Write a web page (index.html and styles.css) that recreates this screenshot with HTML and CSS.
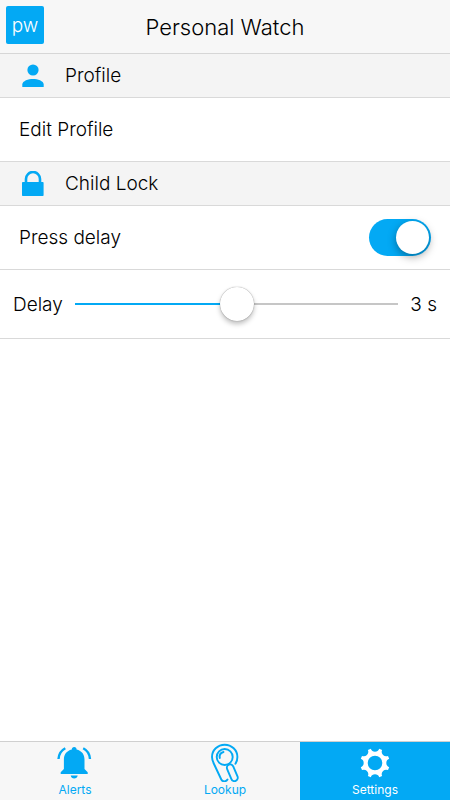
FILE: index.html
```html
<!DOCTYPE html>
<html lang="en">
<head>
<meta charset="utf-8">
<meta name="viewport" content="width=device-width, initial-scale=1">
<title>Personal Watch</title>
<link rel="stylesheet" href="styles.css">
</head>
<body>
<header class="topbar">
  <span class="logo">pw</span>
  <h1 class="title">Personal Watch</h1>
</header>
<main class="content">
  <section>
    <h2 class="section-head">
      <svg class="section-icon" viewBox="0 0 24 26" aria-hidden="true"><circle cx="12" cy="7" r="5.6"/><path d="M1.300 24v-2.500C1.300 17.800 7.500 16 12 16s10.700 1.800 10.700 5.500V24z"/></svg>
      Profile
    </h2>
    <a class="row" href="#profile">Edit Profile</a>
  </section>
  <section>
    <h2 class="section-head">
      <svg class="section-icon" viewBox="0 0 24 26" aria-hidden="true"><path d="M5 13V8a7 7 0 0 1 14 0v5" fill="none" stroke="currentColor" stroke-width="2.600"/><rect x="1" y="11" width="21.600" height="14" rx=".8"/></svg>
      Child Lock
    </h2>
    <div class="row">
      <label for="press">Press delay</label>
      <input class="switch" id="press" type="checkbox" role="switch" checked>
    </div>
    <div class="row row-range">
      <label for="delay">Delay</label>
      <input class="slider" id="delay" type="range" min="1" max="5" value="3">
      <output class="value" for="delay">3 s</output>
    </div>
  </section>
</main>
<nav class="tabs">
  <a class="tab" href="#alerts">
    <svg class="tab-icon" viewBox="0 0 36 40" aria-hidden="true"><path d="M17.200 5c1.500 0 2.400 1 2.400 2.500 5.200 1.300 7.900 5 7.900 10V27l3.200 3.200V32h-27v-1.800L6.900 27v-9.500c0-5 2.700-8.700 7.900-10C14.800 6 15.700 5 17.200 5z"/><path d="M13.700 33.500h7c-.3 1.900-1.700 3-3.500 3s-3.200-1.100-3.500-3z"/><path d="M8.300 6.200C4.200 8.300 1.800 12 1.500 17M26.200 6.200c4.100 2.100 6.500 5.800 6.800 10.800" fill="none" stroke="currentColor" stroke-width="2.400"/></svg>
    Alerts
  </a>
  <a class="tab" href="#lookup">
    <svg class="tab-icon" viewBox="0 0 36 40" aria-hidden="true"><g fill="none" stroke="currentColor" stroke-width="1.900" stroke-linecap="round"><path d="M20.500 37.500C19 40 15.500 40 14.300 37.500L7 22C5.800 19.500 5 17.500 5 15a12.700 12.300 0 0 1 25.400 0c0 2.500-.7 5-2 6.800"/><circle cx="17.700" cy="15" r="8"/><path d="M12.800 16c-.6-3 1-5.300 3.700-6"/><rect x="22" y="22" width="6.600" height="17.500" rx="3.300" transform="rotate(-23 25.300 30.700)"/></g></svg>
    Lookup
  </a>
  <a class="tab tab-active" href="#settings" aria-current="page">
    <svg class="tab-icon" viewBox="0 0 36 40" aria-hidden="true"><path transform="translate(18 21)" fill-rule="evenodd" d="M-4.200-14.200A4.500 4.500 0 0 0 4.200-14.200L7.100-13A4.500 4.500 0 0 0 13-7.100L14.200-4.200A4.500 4.500 0 0 0 14.200 4.200L13 7.100A4.500 4.500 0 0 0 7.100 13L4.200 14.200A4.500 4.500 0 0 0-4.200 14.200L-7.100 13A4.500 4.500 0 0 0-13 7.100L-14.200 4.200A4.500 4.500 0 0 0-14.200-4.200L-13-7.100A4.500 4.500 0 0 0-7.100-13ZM7.300 0A7.300 7.300 0 1 0-7.300 0A7.300 7.300 0 1 0 7.300 0Z"/></svg>
    Settings
  </a>
</nav>
</body>
</html>
```
FILE: styles.css
```css
* { box-sizing: border-box; }
body {
  margin: 0;
  min-height: 100vh;
  display: flex;
  flex-direction: column;
  background: #fff;
  color: #000;
  font-family: Inter, "Liberation Sans", sans-serif;
  font-size: 19px;
  font-weight: 300;
}
a { color: inherit; text-decoration: none; }
.topbar {
  display: grid;
  grid-template-columns: 1fr auto 1fr;
  align-items: center;
  height: 54px;
  padding: 0 6px 3px;
  background: #f7f7f7;
  border-bottom: 1px solid #d6d6d6;
}
.logo {
  width: 38px;
  height: 38px;
  border-radius: 2px;
  background: #03a9f4;
  color: #fff;
  font-size: 19px;
  line-height: 40px;
  text-align: center;
}
.title { margin: 0; padding-top: 3px; font-size: 22px; font-weight: 300; }
.content { flex: 1; }
.section-head {
  display: flex;
  align-items: center;
  gap: 20px;
  height: 44px;
  margin: 0;
  padding: 0 21px;
  background: #f4f4f4;
  border-bottom: 1px solid #d9d9d9;
  font-size: 19px;
  font-weight: 300;
}
.section-icon { width: 24px; height: 26px; fill: currentColor; color: #03a9f4; }
.row {
  display: flex;
  align-items: center;
  justify-content: space-between;
  height: 64px;
  padding: 0 19px;
  border-bottom: 1px solid #d9d9d9;
}
.row-range { height: 69px; padding: 0 13px; gap: 12px; }
.switch {
  appearance: none;
  display: flex;
  justify-content: flex-start;
  width: 62px;
  height: 37px;
  margin: 0;
  padding: 2px;
  border-radius: 19px;
  background: #c8c8c8;
}
.switch:checked { justify-content: flex-end; background: #03a9f4; }
.switch::before {
  content: "";
  width: 33px;
  height: 33px;
  border-radius: 50%;
  background: #fff;
  box-shadow: 0 3px 8px rgba(0, 0, 0, .35);
}
.slider {
  appearance: none;
  flex: 1;
  min-width: 0;
  height: 36px;
  margin: 0;
  background: linear-gradient(to right, #03a9f4 50%, #c6c6c6 50%) center / 100% 2px no-repeat;
}
.slider::-webkit-slider-thumb {
  appearance: none;
  width: 34px;
  height: 34px;
  border-radius: 50%;
  background: #fff;
  box-shadow: 0 0 1px rgba(0, 0, 0, .5), 0 3px 5px rgba(0, 0, 0, .25);
}
.tabs {
  display: grid;
  grid-template-columns: repeat(3, 1fr);
  height: 59px;
  background: #f7f7f7;
  border-top: 1px solid #d0d0d0;
}
.tab {
  display: flex;
  flex-direction: column;
  align-items: center;
  color: #03a9f4;
  font-size: 12px;
  font-weight: 400;
  line-height: 16px;
}
.tab-icon { width: 36px; height: 40px; fill: currentColor; }
.tab-active { background: #03a9f4; color: #fff; }
```
